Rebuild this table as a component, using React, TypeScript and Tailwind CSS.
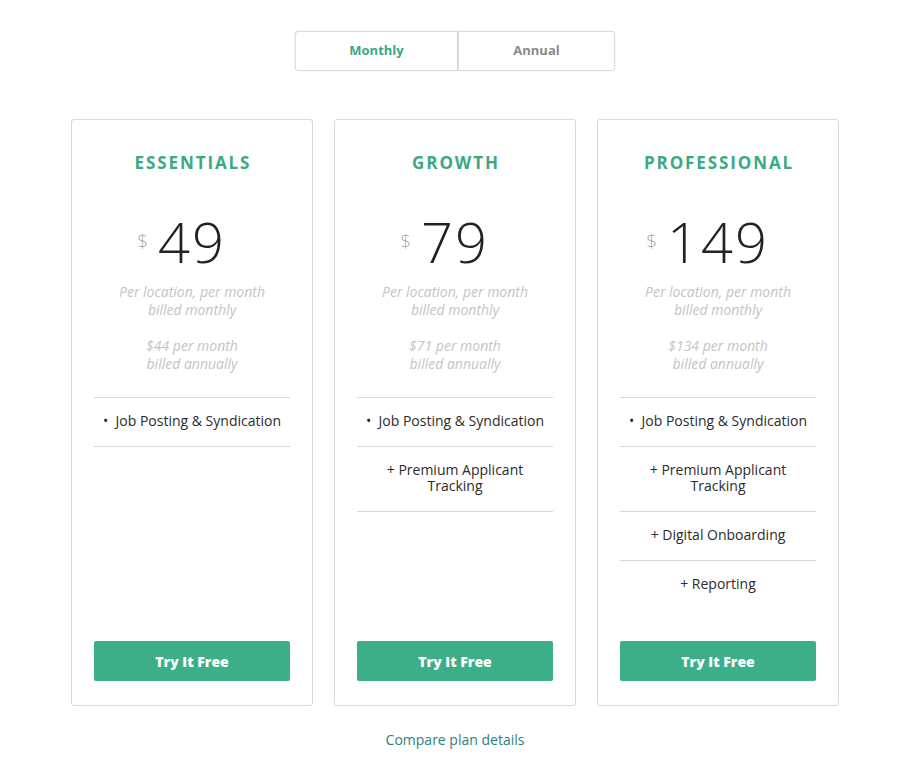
import React from "react";

interface Plan {
  name: string;
  price: string;
  annual: string;
  features: string[];
  openEnd?: boolean;
}

const plans: Plan[] = [
  {
    name: "ESSENTIALS",
    price: "49",
    annual: "$44",
    features: ["•  Job Posting & Syndication"],
  },
  {
    name: "GROWTH",
    price: "79",
    annual: "$71",
    features: ["•  Job Posting & Syndication", "+ Premium Applicant Tracking"],
  },
  {
    name: "PROFESSIONAL",
    price: "149",
    annual: "$134",
    features: [
      "•  Job Posting & Syndication",
      "+ Premium Applicant Tracking",
      "+ Digital Onboarding",
      "+ Reporting",
    ],
    openEnd: true,
  },
];

const PlanCard = ({ plan }: { plan: Plan }) => {
  return (
    <div className="flex h-[587px] w-[242px] flex-col rounded-[3px] border border-[#d9d9d9] bg-white px-[22px]">
      {/* Title */}
      <h2 className="pt-[31px] pl-[2px] text-center text-[17px] font-bold leading-6 tracking-[1.9px] text-[#3aa982]">
        {plan.name}
      </h2>

      {/* Price */}
      <div className="mt-[31px] flex h-[70px] items-center justify-center">
        <span className="relative text-[56px] font-light leading-[70px] tracking-[2px] text-[#222]">
          <span className="absolute right-full top-1/2 mr-[10px] -translate-y-1/2 text-[19px] font-light leading-none tracking-normal text-[#a9a9a9]">
            $
          </span>
          {plan.price}
        </span>
      </div>

      {/* Billing */}
      <p className="mt-[7px] text-center text-[14px] italic leading-[18px] text-[#c4c4c4]">
        Per location, per month
        <br />
        billed monthly
      </p>
      <p className="mt-[18px] text-center text-[14px] italic leading-[18px] text-[#c4c4c4]">
        {plan.annual} per month
        <br />
        billed annually
      </p>

      {/* Features */}
      <ul className="mt-[24px] border-t border-[#d6d9d7]">
        {plan.features.map((f, i) => {
          const last = plan.openEnd && i === plan.features.length - 1;
          return (
            <li
              key={f}
              className={`whitespace-pre-wrap pt-[15px] pb-[17px] text-center text-[14px] leading-4 text-[#2b2b2b] ${
                last ? "" : "border-b border-[#d6d9d7]"
              } ${i === 0 ? "px-0" : "px-6"}`}
            >
              {f}
            </li>
          );
        })}
      </ul>

      {/* Button */}
      <button className="mt-auto mb-[24px] h-10 w-full rounded-[2px] bg-[#3daf88] text-[14px] font-extrabold text-white">
        Try It Free
      </button>
    </div>
  );
};

export default function App() {
  return (
    <div className="min-h-[764px] w-[910px] bg-white font-['Open_Sans',sans-serif]">
      {/* Toggle */}
      <div className="flex justify-center pt-[31px]">
        <button className="h-10 w-[163px] rounded-l-[3px] border border-[#dcdcdc] bg-white text-[13px] font-bold text-[#3aa982] shadow-[0_0_3px_rgba(0,0,0,0.08)]">
          Monthly
        </button>
        <button className="h-10 w-[157px] rounded-r-[3px] border border-[#dcdcdc] bg-white text-[13px] font-bold text-[#8a8a8a] shadow-[0_0_3px_rgba(0,0,0,0.08)]">
          Annual
        </button>
      </div>

      {/* Cards */}
      <div className="mt-12 flex justify-center gap-[21px]">
        {plans.map((p) => (
          <PlanCard key={p.name} plan={p} />
        ))}
      </div>

      <div className="mt-[24px] text-center text-[14px] leading-5 text-[#2f7f7d]">
        Compare plan details
      </div>
    </div>
  );
}
